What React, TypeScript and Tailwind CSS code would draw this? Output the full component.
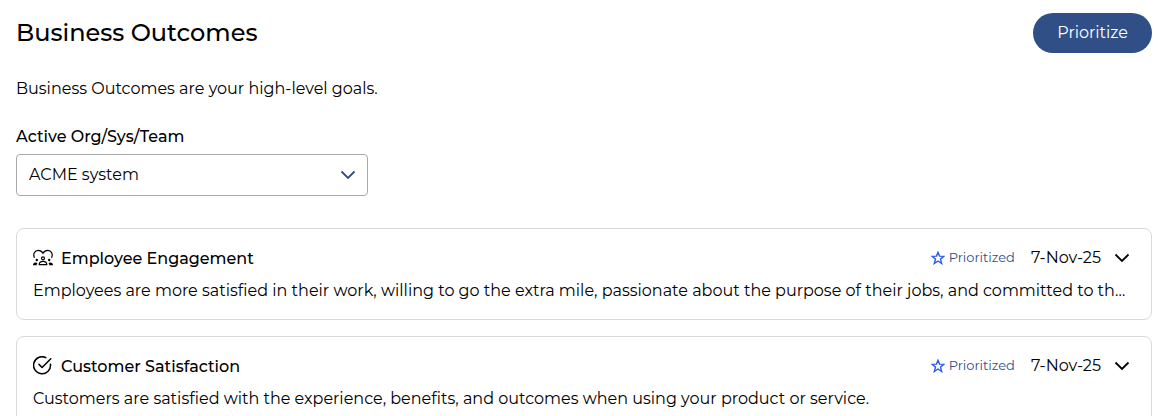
import { useState, type ReactNode } from 'react';

type Outcome = {
    title: string;
    description: string;
    date: string;
    icon: ReactNode;
};

function ChevronIcon({ className }: { className?: string }) {
    return (
        <svg className={className} width="16" height="10" viewBox="0 0 16 10" fill="none" stroke="currentColor" strokeWidth="1.8" aria-hidden="true">
            <path d="M1.5 1.5 8 8l6.5-6.5" />
        </svg>
    );
}

function StarIcon() {
    return (
        <svg width="14" height="14" viewBox="0 0 14 14" fill="none" stroke="#2f5bea" strokeWidth="1.4" aria-hidden="true">
            <path d="M7 1.3 8.5 5.1 12.9 5.3 9.5 8.1 10.7 12.5 7 10 3.3 12.5 4.5 8.1 1.1 5.3 5.5 5.1Z" />
        </svg>
    );
}

function EngagementIcon() {
    return (
        <svg width="20" height="18" viewBox="0 0 20 18" fill="none" stroke="black" strokeWidth="1.2" aria-hidden="true">
            <path d="M1.5 8.8C-.3 5.2 1.6 1.3 5.2 1.3 7.4 1.3 8.9 2.3 10 4.3 11.1 2.3 12.6 1.3 14.8 1.3 18.4 1.3 20.3 5.2 18.5 8.8" />
            <circle cx="10" cy="9.3" r="1.5" />
            <path d="M6.2 15.6c0-2.3 1.5-3.3 3.8-3.3s3.8 1 3.8 3.3Z" />
            <g fill="black" stroke="none">
                <circle cx="3.8" cy="11" r="1.2" />
                <circle cx="16.2" cy="11" r="1.2" />
                <path d="M0 16.3c0-1.9 1-2.8 2.8-2.8.8 0 1.3.2 1.7.5-.6.7-.8 1.4-.8 2.3ZM20 16.3c0-1.9-1-2.8-2.8-2.8-.8 0-1.3.2-1.7.5.6.7.8 1.4.8 2.3Z" />
            </g>
        </svg>
    );
}

function SatisfactionIcon() {
    return (
        <svg width="20" height="20" viewBox="0 0 20 20" fill="none" stroke="black" strokeWidth="1.5" strokeLinecap="round" strokeLinejoin="round" aria-hidden="true">
            <path d="M12.8 1.6A8.5 8.5 0 1 0 17.5 8.3" />
            <path d="M6 8.4 9.1 11.5 17.8 2.8" />
        </svg>
    );
}

const outcomes: Outcome[] = [
    {
        title: 'Employee Engagement',
        description:
            'Employees are more satisfied in their work, willing to go the extra mile, passionate about the purpose of their jobs, and committed to the organization.',
        date: '7-Nov-25',
        icon: <EngagementIcon />,
    },
    {
        title: 'Customer Satisfaction',
        description: 'Customers are satisfied with the experience, benefits, and outcomes when using your product or service.',
        date: '7-Nov-25',
        icon: <SatisfactionIcon />,
    },
];

function OutcomeCard({ title, description, date, icon }: Outcome) {
    const [open, setOpen] = useState(false);

    return (
        <li className="rounded-lg border border-[#d9d9d9] p-4">
            <div className="flex h-[26px] items-center">
                <span className="flex w-7 shrink-0">{icon}</span>
                <h2 className="flex-1 self-end font-medium">{title}</h2>
                <span className="flex items-center gap-1 text-[13px] text-[#2f4f86]">
                    <StarIcon />
                    Prioritized
                </span>
                <span className="ml-4">{date}</span>
                <button type="button" aria-label="Toggle details" aria-expanded={open} onClick={() => setOpen(!open)} className="ml-3 mr-1 p-[1px]">
                    <ChevronIcon />
                </button>
            </div>
            <p className={open ? 'mr-2 mt-2' : 'mr-2 mt-2 truncate'}>{description}</p>
        </li>
    );
}

export default function App() {
    return (
        <main className="overflow-hidden bg-white pb-4 pl-4 pr-[6px] pt-[13px] font-['Montserrat','Inter',sans-serif] text-base text-black antialiased">
            <header className="flex items-center justify-between">
                <h1 className="text-2xl font-medium">Business Outcomes</h1>
                <button type="button" className="h-10 rounded-full bg-[#2f4f86] px-6 text-white">
                    Prioritize
                </button>
            </header>

            <p className="mt-6">Business Outcomes are your high-level goals.</p>

            <div className="mt-6 w-[352px] max-w-full">
                <label htmlFor="team" className="block font-medium">
                    Active Org/Sys/Team
                </label>
                <div className="relative mt-[5px]">
                    <select id="team" className="h-[42px] w-full appearance-none rounded border border-[#a9a9a9] bg-white px-3">
                        <option>ACME system</option>
                    </select>
                    <ChevronIcon className="pointer-events-none absolute right-3 top-4 text-[#2f4f86]" />
                </div>
            </div>

            <ul className="mt-8 flex flex-col gap-4">
                {outcomes.map((outcome) => (
                    <OutcomeCard key={outcome.title} {...outcome} />
                ))}
            </ul>
        </main>
    );
}
